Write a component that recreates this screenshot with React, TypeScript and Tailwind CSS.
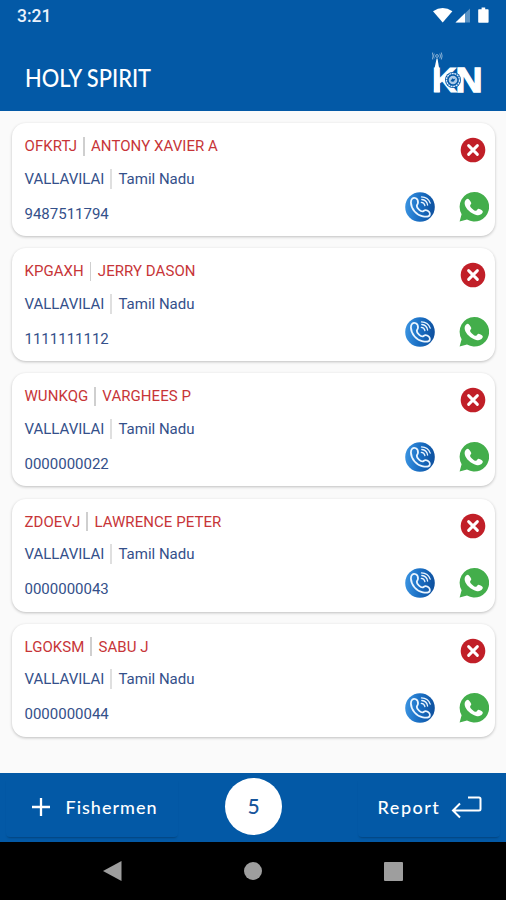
const contacts = [
  { code: 'OFKRTJ', name: 'ANTONY XAVIER A', phone: '9487511794' },
  { code: 'KPGAXH', name: 'JERRY DASON', phone: '1111111112' },
  { code: 'WUNKQG', name: 'VARGHEES P', phone: '0000000022' },
  { code: 'ZDOEVJ', name: 'LAWRENCE PETER', phone: '0000000043' },
  { code: 'LGOKSM', name: 'SABU J', phone: '0000000044' },
];

type Contact = (typeof contacts)[number];

function StatusBar() {
  return (
    <div className="flex h-8 items-center justify-between pl-[17px] pr-[16px]">
      <span className="text-[17.5px] font-medium leading-8 text-[#e9f1fb]">3:21</span>
      <svg width="57" height="18" viewBox="0 0 57 18" fill="#fff" className="mt-[-1px]">
        <path d="M0 4.200Q9.700-2.200 19.400 4.200L9.700 15.500Z" />
        <path d="M22.500 15.500 37 1.500V15.500Z" fillOpacity=".35" />
        <path d="M22.500 15.500 32 6.300V15.500Z" />
        <path d="M48.600 .5h3.600v1.800h2.700q.7 0 .7.700v12q0 .7-.7.700h-9q-.7 0-.7-.7V3q0-.7.700-.7h2.700Z" />
      </svg>
    </div>
  );
}

function Logo() {
  return (
    <svg width="54" height="52" viewBox="0 0 54 52" fill="#fff">
      <path d="M4.600 6.500h.9l1.600 9.500.8 24H1.900l.7-24Z" />
      <g fill="none" stroke="#fff" strokeOpacity=".65" strokeWidth=".8">
        <circle cx="5" cy="4" r="1.400" />
        <path d="M2.200 1.600Q.8 4 2.200 6.500M7.800 1.600Q9.200 4 7.800 6.500M.7.500Q-.9 4 .7 7.500M9.300.5Q10.900 4 9.300 7.500" />
      </g>
      <text x="0" y="40" fontFamily="Liberation Sans, sans-serif" fontSize="35" fontWeight="700" stroke="#fff" strokeWidth=".8" textLength="25" lengthAdjust="spacingAndGlyphs">K</text>
      <text x="23.500" y="40" fontFamily="Liberation Sans, sans-serif" fontSize="35" fontWeight="700" stroke="#fff" strokeWidth="1.300" textLength="27" lengthAdjust="spacingAndGlyphs">N</text>
      <circle cx="21" cy="28" r="8" fill="#0359a6" />
      <circle cx="21" cy="28" r="6.500" fill="none" stroke="#dbeaff" strokeWidth="1.300" strokeDasharray="2 .6" />
      <circle cx="21" cy="28" r="4.300" fill="#aecbe8" />
      <path d="m18.500 29 2-2.800 1.200 1 1.800-.6-1.600 3-1.700.2Z" fill="#0359a6" />
    </svg>
  );
}

function CloseIcon() {
  return (
    <svg width="26" height="26" viewBox="0 0 26 26">
      <circle cx="13" cy="13" r="12.300" fill="#c11f28" />
      <path d="m8.600 8.600 8.800 8.800m0-8.800-8.800 8.800" stroke="#fff" strokeWidth="2.900" strokeLinecap="round" />
    </svg>
  );
}

function CallIcon() {
  return (
    <svg width="30" height="30" viewBox="0 0 30 30" fill="none">
      <defs>
        <linearGradient id="callFill" x1="0" y1=".2" x2="1" y2=".3">
          <stop stopColor="#3c95e2" />
          <stop offset=".5" stopColor="#1a6fc4" />
          <stop offset="1" stopColor="#0e519f" />
        </linearGradient>
      </defs>
      <circle cx="15" cy="15" r="14.800" fill="url(#callFill)" />
      <g stroke="#eaf5ff" strokeWidth="1.800" strokeLinecap="round" strokeLinejoin="round">
        <path d="M10.800 6.200C8 4.900 5.800 7.200 5.900 10.500c.2 6.500 5.700 12.900 12 13.900 3.400.6 6.400.3 6.900-1.700.5-2.200-1.400-4.200-3.800-4.600-1.500-.3-2.100.9-3 1.200-2.200.7-6.300-3.200-6.200-5.600 0-1.100 1.100-1.500 1.200-2.900.1-2-.9-4-2.200-4.600Z" />
        <path d="M16.300 10.300c1.900.2 3.200 1.400 3.600 3.200M16.800 7.500c3.100.3 5.300 2.500 5.800 5.500M16.500 4.900c4.200.1 7.400 2.500 8.700 6.200" strokeWidth="1.300" />
      </g>
    </svg>
  );
}

function WhatsAppIcon() {
  return (
    <svg width="30" height="30" viewBox="0 0 30 30">
      <path d="M15.200.1A14.700 14.700 0 0 0 2.600 22.200L.6 29.600l7.400-2.100A14.700 14.700 0 1 0 15.200.1Z" fill="#43ae4b" />
      <path d="M9.300 6.900c-.6-.3-1.300-.1-1.800.4C5.900 8.600 5.300 10.500 5.800 12.500c1 4.400 6.100 9.100 11.400 10.400 2.500.7 4.900 0 6.100-1.800.6-.9.600-1.800.3-2.200-.4-.5-3.400-2.100-4.200-2.100-.8 0-1.500 1.900-2.400 2-1.600.2-5.500-3.100-5.900-4.900-.2-.8 1.300-1.700 1.200-2.800-.1-.8-2-3.800-3-4.200Z" fill="#fff" />
    </svg>
  );
}

function ContactCard({ contact }: { contact: Contact }) {
  return (
    <article className="flex h-[113px] justify-between rounded-[14px] bg-white pl-[12.500px] pr-[6.500px] text-[15px] leading-5 shadow-[0_1px_3px_rgba(0,0,0,0.24)]">
      <div className="flex flex-col pt-[13px] text-[#34508a]">
        <div className="flex h-5 items-center whitespace-nowrap text-[#c73538]">
          <span className="tracking-[0.06px]">{contact.code}</span>
          <span className="ml-[6px] mr-[6.500px] h-[19px] w-[1.500px] bg-[#cfcfcf]" />
          <span className="tracking-[0.06px]">{contact.name}</span>
        </div>
        <div className="mt-[12.500px] flex h-5 items-center whitespace-nowrap">
          <span>VALLAVILAI</span>
          <span className="ml-[6px] mr-[6px] h-[20px] w-[2px] bg-[#dfdfdf]" />
          <span>Tamil Nadu</span>
        </div>
        <div className="mt-[15px] h-5">{contact.phone}</div>
      </div>
      <div className="flex flex-col items-end pt-[14px]">
        <div className="mr-[2.500px]"><CloseIcon /></div>
        <div className="mt-[29px] flex gap-[24px]">
          <CallIcon />
          <WhatsAppIcon />
        </div>
      </div>
    </article>
  );
}

function Footer() {
  return (
    <footer className="flex h-[69.500px] shrink-0 items-start justify-between bg-[#0359a6] px-[6px] pt-[5px] font-['Lato',sans-serif] text-white">
      <div className="flex">
        <button className="flex h-[59px] w-[172px] items-center rounded shadow-[0_2px_2px_-1px_rgba(0,0,0,0.25)]">
          <svg width="18" height="18" viewBox="0 0 18 18" className="ml-[26px]" stroke="#fff" strokeWidth="2.300">
            <path d="M9 0v18M0 9h18" />
          </svg>
          <span className="ml-[15.500px] text-[18px] font-medium leading-6 tracking-[1px]">Fishermen</span>
        </button>
        <div className="ml-[47px] flex size-[57px] items-center justify-center rounded-full bg-white text-[21px] font-medium text-[#17559b]">5</div>
      </div>
      <button className="flex h-[59px] w-[142px] items-center rounded shadow-[0_2px_2px_-1px_rgba(0,0,0,0.25)]">
        <span className="ml-[18.500px] w-[65px] text-[18px] font-medium leading-6 tracking-[1.500px]">Report</span>
        <svg width="31" height="23" viewBox="0 0 31 23" className="ml-[9px]" fill="none" stroke="#fff" strokeWidth="2">
          <path d="M17 1.500h11q1.500 0 1.500 1.500v10q0 1.500-1.500 1.500H2M9 7.500l-7 7 7 7" />
        </svg>
      </button>
    </footer>
  );
}

function NavigationBar() {
  return (
    <nav className="flex h-[58px] shrink-0 items-center justify-between bg-black pl-[103px] pr-[103px] text-[#9e9e9e]">
      <svg width="19" height="20" viewBox="0 0 19 20" fill="currentColor"><path d="M18.500 0v20L0 10Z" /></svg>
      <span className="size-[18px] rounded-full bg-current" />
      <span className="size-[19px] rounded-[1px] bg-current" />
    </nav>
  );
}

export default function App() {
  return (
    <div className="flex h-[900px] w-[506px] flex-col overflow-hidden bg-[#fafafa] font-['Roboto',sans-serif]">
      <header className="h-[111px] shrink-0 bg-[#0359a6] text-white">
        <StatusBar />
        <div className="flex items-start justify-between pl-[25px] pr-[20px] pt-5">
          <h1 className="mt-[12px] origin-left scale-x-[0.91] font-['Lato',sans-serif] text-[24px] font-medium leading-7">HOLY SPIRIT</h1>
          <Logo />
        </div>
      </header>
      <main className="flex min-h-0 flex-1 flex-col gap-[12.200px] px-[12px] pr-[11px] pt-[12px]">
        {contacts.map((contact) => <ContactCard key={contact.code} contact={contact} />)}
      </main>
      <Footer />
      <NavigationBar />
    </div>
  );
}
